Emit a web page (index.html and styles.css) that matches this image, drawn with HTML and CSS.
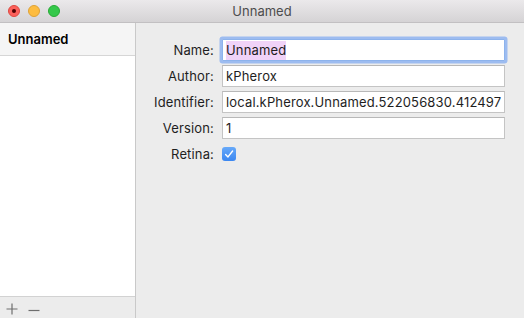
FILE: index.html
```html
<!DOCTYPE html>
<html>
<head>
<meta charset="utf-8">
<link rel="stylesheet" href="styles.css">
</head>
<body>
<div class="window">
  <div class="titlebar">
    <div class="lights">
      <span class="light red"><span class="dot"></span></span>
      <span class="light yellow"></span>
      <span class="light green"></span>
    </div>
    <div class="title">Unnamed</div>
  </div>
  <div class="main">
    <div class="sidebar">
      <div class="side-item">Unnamed</div>
      <div class="side-list"></div>
      <div class="side-bar">
        <span class="btn">
          <svg width="14" height="14" viewBox="0 0 14 14"><path d="M7 1.5V12.5M1.5 7H12.5" stroke="#6e6e6e" stroke-width="1.2" fill="none"/></svg>
        </span>
        <span class="btn">
          <svg width="14" height="14" viewBox="0 0 14 14"><path d="M1.5 8.5H12.5" stroke="#6e6e6e" stroke-width="1.2" fill="none"/></svg>
        </span>
      </div>
    </div>
    <div class="form">
      <label class="lbl">Name:</label>
      <div class="field focus"><span class="sel">Unnamed</span></div>
      <label class="lbl">Author:</label>
      <div class="field">kPherox</div>
      <label class="lbl">Identifier:</label>
      <div class="field">local.kPherox.Unnamed.522056830.412497</div>
      <label class="lbl">Version:</label>
      <div class="field">1</div>
      <label class="lbl">Retina:</label>
      <div class="check-cell">
        <span class="check">
          <svg width="14" height="14" viewBox="0 0 14 14"><path d="M3.6 7.4L6 9.9L10.6 4" stroke="#fff" stroke-width="1.4" fill="none" stroke-linecap="round" stroke-linejoin="round"/></svg>
        </span>
      </div>
    </div>
  </div>
</div>
</body>
</html>
```

FILE: styles.css
```css
* { box-sizing: border-box; }
html, body { margin: 0; padding: 0; }
body {
  width: 524px;
  height: 318px;
  overflow: hidden;
  font-family: Inter, "Liberation Sans", Arial, sans-serif;
  font-size: 13px;
  color: #1e1e1e;
}
.window {
  width: 524px;
  height: 318px;
  display: flex;
  flex-direction: column;
  background: #ececec;
}
.titlebar {
  height: 23px;
  flex: none;
  position: relative;
  background: linear-gradient(#ebe9eb, #d5d3d5);
  border-bottom: 1px solid #c2c0c2;
  display: flex;
  align-items: center;
  justify-content: center;
}
.lights {
  position: absolute;
  left: 8px;
  top: 5px;
  display: flex;
  gap: 8px;
}
.light {
  width: 12px;
  height: 12px;
  border-radius: 50%;
  display: flex;
  align-items: center;
  justify-content: center;
}
.red { background: #fc605b; border: 1px solid #de4840; }
.yellow { background: #fdbc40; border: 1px solid #dea236; }
.green { background: #34c84a; border: 1px solid #27aa35; }
.dot { width: 4px; height: 4px; border-radius: 50%; background: #4d0000; }
.title {
  color: #4d4d4d;
  font-size: 13px;
}
.main {
  flex: 1;
  display: flex;
  min-height: 0;
}
.sidebar {
  width: 136px;
  flex: none;
  display: flex;
  flex-direction: column;
  border-right: 1px solid #c9c9c9;
  background: #ffffff;
}
.side-item {
  height: 33px;
  flex: none;
  background: #f5f5f5;
  border-bottom: 1px solid #d6d6d6;
  font-weight: 600;
  color: #000;
  padding-left: 8px;
  display: flex;
  align-items: center;
  padding-bottom: 1px;
}
.side-list { flex: 1; background: #fff; }
.side-bar {
  height: 22px;
  flex: none;
  background: #ececec;
  border-top: 1px solid #d2d2d2;
  display: flex;
  align-items: center;
  padding-left: 5px;
  padding-top: 3px;
  gap: 8px;
}
.btn { display: flex; width: 14px; height: 14px; }
.form {
  flex: 1;
  display: grid;
  grid-template-columns: 78px 283px;
  grid-auto-rows: 22px;
  column-gap: 8px;
  row-gap: 4px;
  padding-top: 16px;
  align-content: start;
  letter-spacing: 0.15px;
}
.lbl {
  text-align: right;
  align-self: center;
  color: #1e1e1e;
  white-space: nowrap;
}
.field {
  background: #fff;
  border: 1px solid #c4c4c4;
  border-top-color: #b8b8b8;
  padding: 0 3px;
  display: flex;
  align-items: center;
  white-space: nowrap;
  overflow: hidden;
  color: #1e1e1e;
}
.field.focus {
  border-color: #8db3ec;
  box-shadow: 0 0 0 2.5px #9dbcf0;
  border-radius: 1px;
}
.sel {
  background: #f0d3f8;
  padding: 1px 0 2px;
}
.check-cell {
  display: flex;
  align-items: center;
}
.check {
  width: 14px;
  height: 14px;
  border-radius: 3px;
  background: linear-gradient(#67a9f9, #3b87f1);
  display: flex;
}
```
